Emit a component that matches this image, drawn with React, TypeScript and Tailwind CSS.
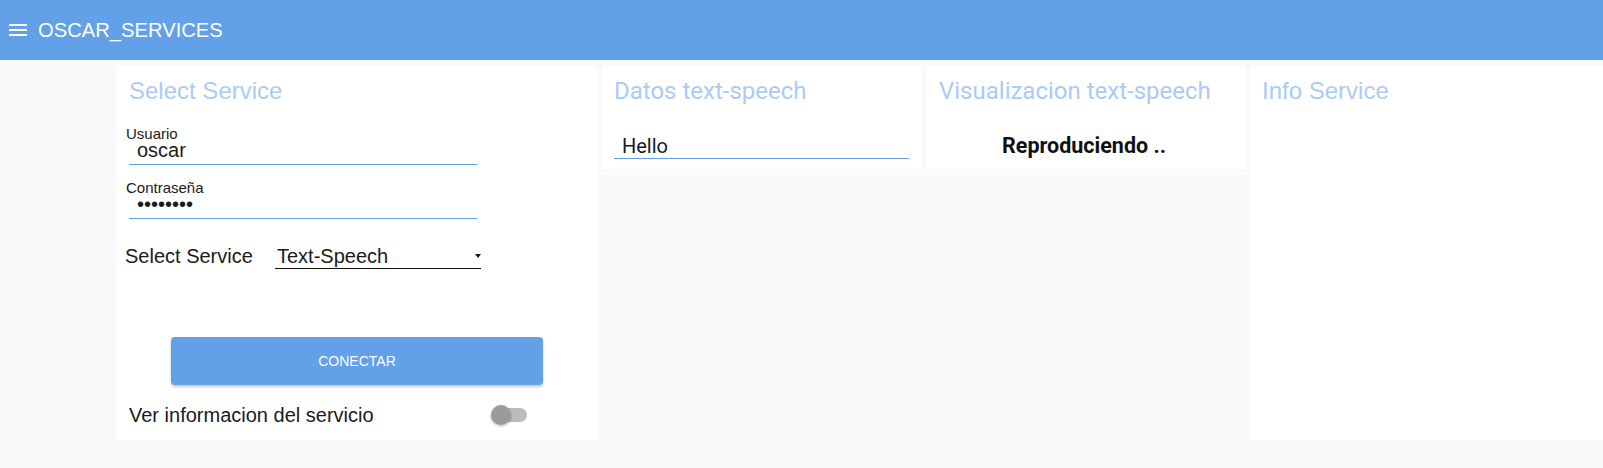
import React from "react";

const arial = { fontFamily: '"Liberation Sans", Arial, sans-serif' };
const roboto = { fontFamily: 'Roboto, "Liberation Sans", sans-serif' };

function MenuIcon() {
  return (
    <svg width="24" height="24" viewBox="0 0 24 24" fill="white">
      <path d="M3 18h18v-2H3v2zm0-5h18v-2H3v2zm0-7v2h18V6H3z" />
    </svg>
  );
}

export default function App() {
  return (
    <div className="w-[1603px] h-[468px] bg-[#fafafa] overflow-hidden" style={arial}>
      {/* App bar */}
      <header className="h-[60px] bg-[#62a0e8] flex items-center pl-[6px]">
        <MenuIcon />
        <span className="ml-[8px] text-[20.2px] leading-[24px] text-white" style={arial}>
          OSCAR_SERVICES
        </span>
      </header>

      {/* Content */}
      <main className="flex items-start pt-[6px]">
        <div className="w-[116px] shrink-0" />

        {/* Select Service panel */}
        <section className="w-[481px] h-[374px] shrink-0 bg-white flex flex-col pt-[11px]">
          <h2 className="ml-[13px] text-[24px] leading-[28px] text-[#abcbf4]" style={arial}>
            Select Service
          </h2>

          <label className="ml-[10px] mt-[21px] text-[15px] leading-[15px] text-[#1a1a1a]">Usuario</label>
          <div className="ml-[13px] mt-[-1px] w-[348px] pl-[8px] pb-[4px] border-b border-[#62a0e8] text-[20px] leading-[20px] text-[#1a1a1a]">
            oscar
          </div>

          <label className="ml-[10px] mt-[15px] text-[15px] leading-[15px] text-[#1a1a1a]">Contraseña</label>
          <div className="ml-[13px] mt-[-1px] w-[348px] pl-[8px] pb-[4px] border-b border-[#62a0e8] text-[20px] leading-[20px] text-[#1a1a1a]">
            ••••••••
          </div>

          <div className="mt-[25px] ml-[9px] flex items-start">
            <span className="w-[150px] text-[20px] leading-[24px] text-[#1a1a1a]">Select Service</span>
            <div className="w-[206px] h-[25px] border-b border-[#111] flex items-center justify-between pl-[2px]">
              <span className="text-[20px] leading-[24px] text-[#1a1a1a]">Text-Speech</span>
              <span className="w-0 h-0 border-l-[3.5px] border-r-[3.5px] border-t-[4px] border-l-transparent border-r-transparent border-t-[#111]" />
            </div>
          </div>

          <button className="mt-[68px] ml-[55px] w-[372px] h-[48px] rounded-[4px] bg-[#62a0e8] text-white text-[14px] leading-[16px] shadow-[0_2px_3px_rgba(0,0,0,0.22)]" style={arial}>
            CONECTAR
          </button>

          <div className="mt-[18px] w-[411px] pl-[13px] flex items-center justify-between">
            <span className="text-[20px] leading-[24px] text-[#1a1a1a]">Ver informacion del servicio</span>
            <div className="relative w-[36px] h-[20px] flex items-center">
              <div className="ml-[3px] w-[33px] h-[14px] rounded-full bg-[#bcbcbc]" />
              <div className="absolute left-0 top-0 w-[20px] h-[20px] rounded-full bg-[#9b9b9b] shadow-[0_1px_3px_rgba(0,0,0,0.3)]" />
            </div>
          </div>
        </section>

        {/* Datos text-speech */}
        <section className="ml-[5px] w-[320px] h-[103px] shrink-0 bg-white flex flex-col pt-[11px]" style={roboto}>
          <h2 className="ml-[12px] text-[24px] leading-[28px] text-[#abcbf4]">Datos text-speech</h2>
          <div className="ml-[12px] mt-[29px] w-[295px] pl-[8px] border-b border-[#62a0e8] text-[20px] leading-[24px] text-[#1a1a1a]">
            Hello
          </div>
        </section>

        {/* Visualizacion text-speech */}
        <section className="ml-[4px] w-[320px] h-[103px] shrink-0 bg-white flex flex-col pt-[11px]" style={roboto}>
          <h2 className="ml-[13px] text-[24px] leading-[28px] text-[#abcbf4]">Visualizacion text-speech</h2>
          <p className="mt-[28px] pr-[4px] text-center font-bold text-[21.5px] leading-[26px] text-[#111]">Reproduciendo ..</p>
        </section>

        {/* Info Service */}
        <section className="ml-[4px] flex-1 h-[374px] bg-white pt-[11px]">
          <h2 className="ml-[12px] text-[24px] leading-[28px] text-[#abcbf4]" style={arial}>
            Info Service
          </h2>
        </section>
      </main>
    </div>
  );
}
